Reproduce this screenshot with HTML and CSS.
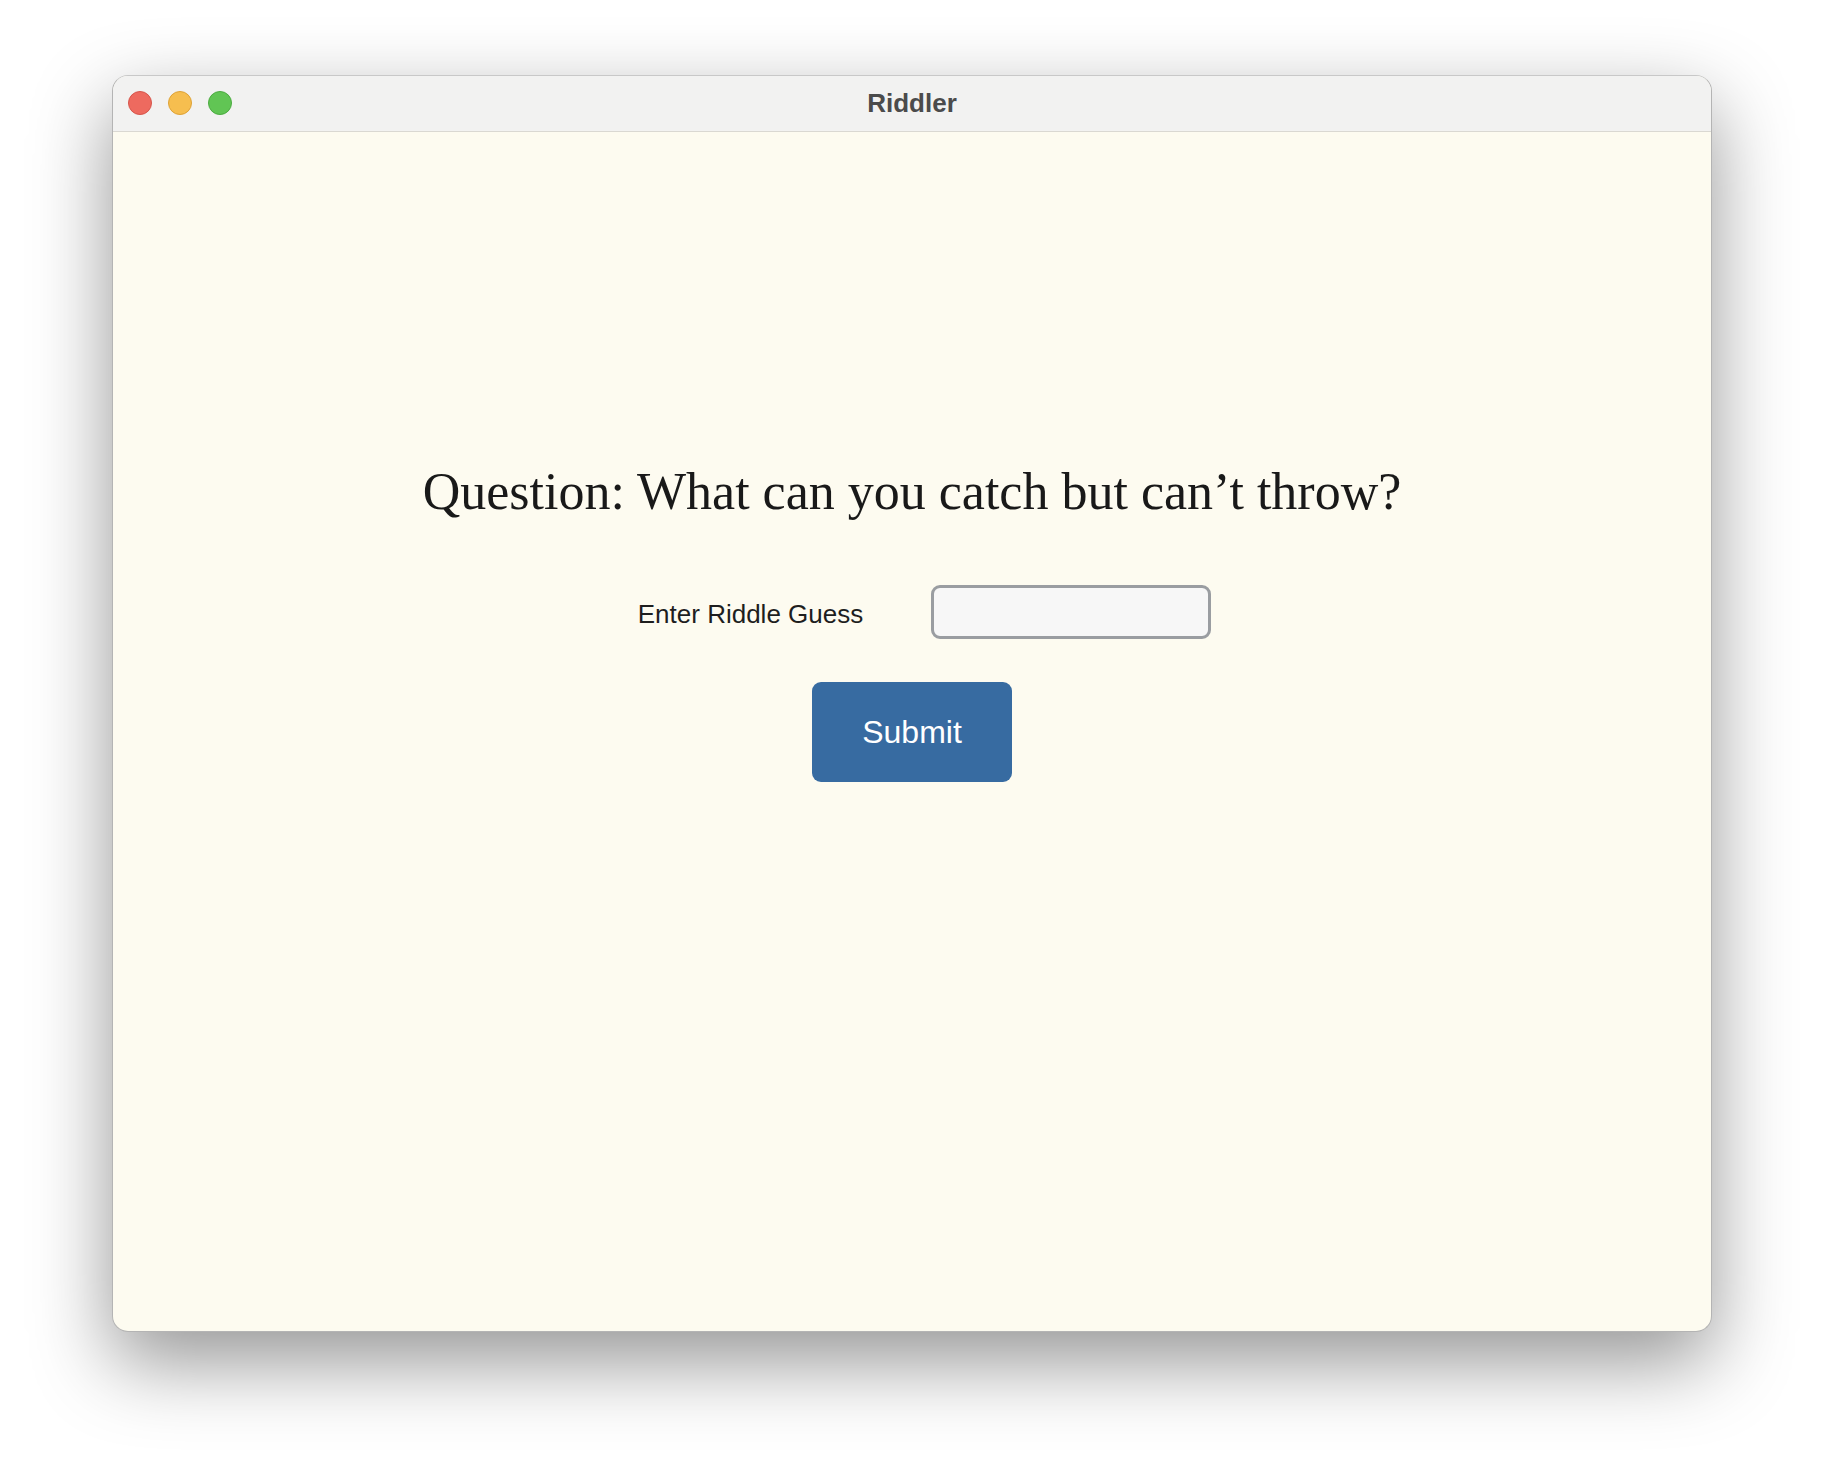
FILE: index.html
```html
<!DOCTYPE html>
<html lang="en">
<head>
<meta charset="utf-8">
<title>Riddler</title>
<link rel="stylesheet" href="styles.css">
</head>
<body>
  <div class="window">
    <div class="titlebar">
      <div class="lights">
        <span class="light red"></span>
        <span class="light yellow"></span>
        <span class="light green"></span>
      </div>
      <div class="title">Riddler</div>
    </div>
    <div class="content">
      <h1 class="question">Question: What can you catch but can’t throw?</h1>
      <div class="guess-row">
        <label class="guess-label" for="guess">Enter Riddle Guess</label>
        <input class="guess-input" id="guess" type="text">
      </div>
      <button class="submit" type="button">Submit</button>
    </div>
  </div>
</body>
</html>
```

FILE: styles.css
```css
html, body {
  margin: 0;
  padding: 0;
  background: #ffffff;
}

body {
  box-sizing: border-box;
  min-height: 1480px;
  padding: 75px 112px 148px 112px;
  font-family: "Liberation Sans", Arial, sans-serif;
}

.window {
  box-sizing: border-box;
  width: 1600px;
  height: 1257px;
  border: 1px solid #b4b4b4;
  border-top-color: #c8c8c8;
  border-radius: 16px;
  overflow: hidden;
  display: flex;
  flex-direction: column;
  box-shadow: 0 30px 80px rgba(0, 0, 0, 0.42);
  background: #fdfbf0;
}

.titlebar {
  position: relative;
  box-sizing: border-box;
  height: 56px;
  flex: 0 0 56px;
  background: #f2f2f1;
  border-bottom: 1px solid #dad8d2;
  display: flex;
  align-items: center;
  justify-content: center;
}

.lights {
  position: absolute;
  left: 15px;
  top: 15px;
  display: flex;
  gap: 16px;
}

.light {
  box-sizing: border-box;
  width: 24px;
  height: 24px;
  border-radius: 50%;
}

.red { background: #ee6a5f; border: 1px solid #d6554b; }
.yellow { background: #f6be4f; border: 1px solid #dea236; }
.green { background: #61c554; border: 1px solid #4cab40; }

.title {
  font-family: "Liberation Sans", Arial, sans-serif;
  font-weight: bold;
  font-size: 26px;
  color: #4b4b4b;
  margin-top: -1px;
}

.content {
  flex: 1;
  display: flex;
  flex-direction: column;
  align-items: center;
  padding-top: 330px;
}

.question {
  margin: 0;
  font-family: "Liberation Serif", "Times New Roman", serif;
  font-weight: normal;
  font-size: 52px;
  line-height: 60px;
  color: #191919;
}

.guess-row {
  margin-top: 63px;
  display: flex;
  align-items: center;
  justify-content: center;
  gap: 68px;
  padding-left: 25px;
}

.guess-label {
  font-family: "Liberation Sans", Arial, sans-serif;
  font-size: 26px;
  color: #1e1e1e;
  margin-top: 4px;
}

.guess-input {
  box-sizing: border-box;
  width: 280px;
  height: 54px;
  border: 3px solid #9a9da1;
  border-radius: 9px;
  background: #f7f7f7;
  margin: 0;
  padding: 0 8px;
  outline: none;
}

.submit {
  box-sizing: border-box;
  margin-top: 43px;
  width: 200px;
  height: 100px;
  border: none;
  border-radius: 9px;
  background: #376ba1;
  color: #ffffff;
  font-family: "Liberation Sans", Arial, sans-serif;
  font-size: 32px;
  padding: 0;
  cursor: pointer;
}
```
